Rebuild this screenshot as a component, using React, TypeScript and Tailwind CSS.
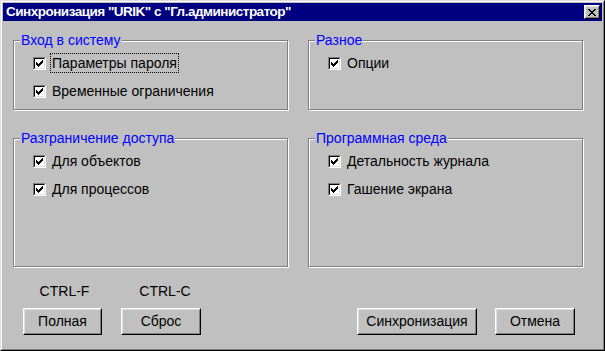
import React from 'react';

const CheckMark: React.FC = () => (
  <svg width="7" height="7" viewBox="0 0 7 7" shapeRendering="crispEdges">
    <path
      fill="#000"
      d="M6 0h1v1h-1z M5 1h2v1h-2z M0 2h1v1h-1z M4 2h3v1h-3z M0 3h2v1h-2z M3 3h3v1h-3z M0 4h5v1h-5z M1 5h3v1h-3z M2 6h1v1h-1z"
    />
  </svg>
);

const CloseGlyph: React.FC = () => (
  <svg width="8" height="7" viewBox="0 0 8 7" shapeRendering="crispEdges">
    <path
      fill="#000"
      d="M0 0h2v1h-2z M6 0h2v1h-2z M1 1h2v1h-2z M5 1h2v1h-2z M2 2h4v1h-4z M3 3h2v1h-2z M2 4h4v1h-4z M1 5h2v1h-2z M5 5h2v1h-2z M0 6h2v1h-2z M6 6h2v1h-2z"
    />
  </svg>
);

const CheckBox: React.FC<{ label: string; focused?: boolean }> = ({ label, focused }) => (
  <div className="h-[20px] flex items-center">
    <span className="w-[13px] h-[13px] flex border border-t-[#808080] border-l-[#808080] border-r-white border-b-white">
      <span className="flex-1 flex items-center justify-center bg-white border border-t-black border-l-black border-r-[#dfdfdf] border-b-[#dfdfdf]">
        <CheckMark />
      </span>
    </span>
    <span
      className={
        focused
          ? 'ml-[4px] px-[1px] h-[20px] flex items-center border border-dotted border-black'
          : 'ml-[4px] px-[1px] h-[20px] flex items-center border border-transparent'
      }
    >
      {label}
    </span>
  </div>
);

const Group: React.FC<{ title: string; height: string; children: React.ReactNode }> = ({
  title,
  height,
  children,
}) => (
  <div
    className={`${height} border border-[#808080] shadow-[inset_1px_1px_0_#fff,1px_1px_0_#fff]`}
  >
    <div className="flex -mt-[8px] ml-[6px]">
      <span className="px-[1px] h-[15px] leading-[15px] bg-[#c0c0c0] text-[#0000ff]">{title}</span>
    </div>
    <div className="mt-[5px] pl-[19px] flex flex-col gap-[8px]">{children}</div>
  </div>
);

const Button: React.FC<{ label: string; width: string }> = ({ label, width }) => (
  <button className={`${width} h-[27px] p-0 border border-t-white border-l-white border-r-black border-b-black bg-[#c0c0c0]`}>
    <span className="h-full flex items-center justify-center border border-t-[#dfdfdf] border-l-[#dfdfdf] border-r-[#808080] border-b-[#808080]">
      {label}
    </span>
  </button>
);

const App: React.FC = () => {
  return (
    <div className="w-[605px] h-[351px] bg-[#c0c0c0] text-black text-[14px] font-['Liberation_Sans',Arial,sans-serif] border border-t-[#dfdfdf] border-l-[#dfdfdf] border-r-black border-b-black">
      <div className="h-full p-px flex flex-col border border-t-white border-l-white border-r-[#808080] border-b-[#808080]">
        <div className="h-[18px] bg-[#000080] flex items-center justify-between pl-[3px] pr-[2px]">
          <span className="text-white font-bold text-[13.5px] tracking-[-0.5px] leading-[18px]">
            Синхронизация "URIK" с "Гл.администратор"
          </span>
          <span className="w-[16px] h-[14px] flex border border-t-white border-l-white border-r-black border-b-black bg-[#c0c0c0]">
            <span className="flex-1 flex items-center justify-center border border-t-[#dfdfdf] border-l-[#dfdfdf] border-r-[#808080] border-b-[#808080]">
              <CloseGlyph />
            </span>
          </span>
        </div>

        <div className="flex-1 flex flex-col">
          <div className="mt-[19px] pl-[10px] grid grid-cols-[275px_275px] gap-x-[20px] gap-y-[28px]">
            <Group title="Вход в систему" height="h-[70px]">
              <CheckBox label="Параметры пароля" focused />
              <CheckBox label="Временные ограничения" />
            </Group>
            <Group title="Разное" height="h-[70px]">
              <CheckBox label="Опции" />
            </Group>
            <Group title="Разграничение доступа" height="h-[129px]">
              <CheckBox label="Для объектов" />
              <CheckBox label="Для процессов" />
            </Group>
            <Group title="Программная среда" height="h-[129px]">
              <CheckBox label="Детальность журнала" />
              <CheckBox label="Гашение экрана" />
            </Group>
          </div>

          <div className="mt-auto mb-[13px] flex items-end justify-between pl-[20px] pr-[27px]">
            <div className="flex gap-[19px]">
              <div className="flex flex-col items-center gap-[9px]">
                <span className="leading-[16px] pl-[4px]">CTRL-F</span>
                <Button label="Полная" width="w-[79px]" />
              </div>
              <div className="flex flex-col items-center gap-[9px]">
                <span className="leading-[16px] pl-[8px]">CTRL-C</span>
                <Button label="Сброс" width="w-[80px]" />
              </div>
            </div>
            <div className="flex gap-[18px]">
              <Button label="Синхронизация" width="w-[120px]" />
              <Button label="Отмена" width="w-[80px]" />
            </div>
          </div>
        </div>
      </div>
    </div>
  );
};

export default App;
